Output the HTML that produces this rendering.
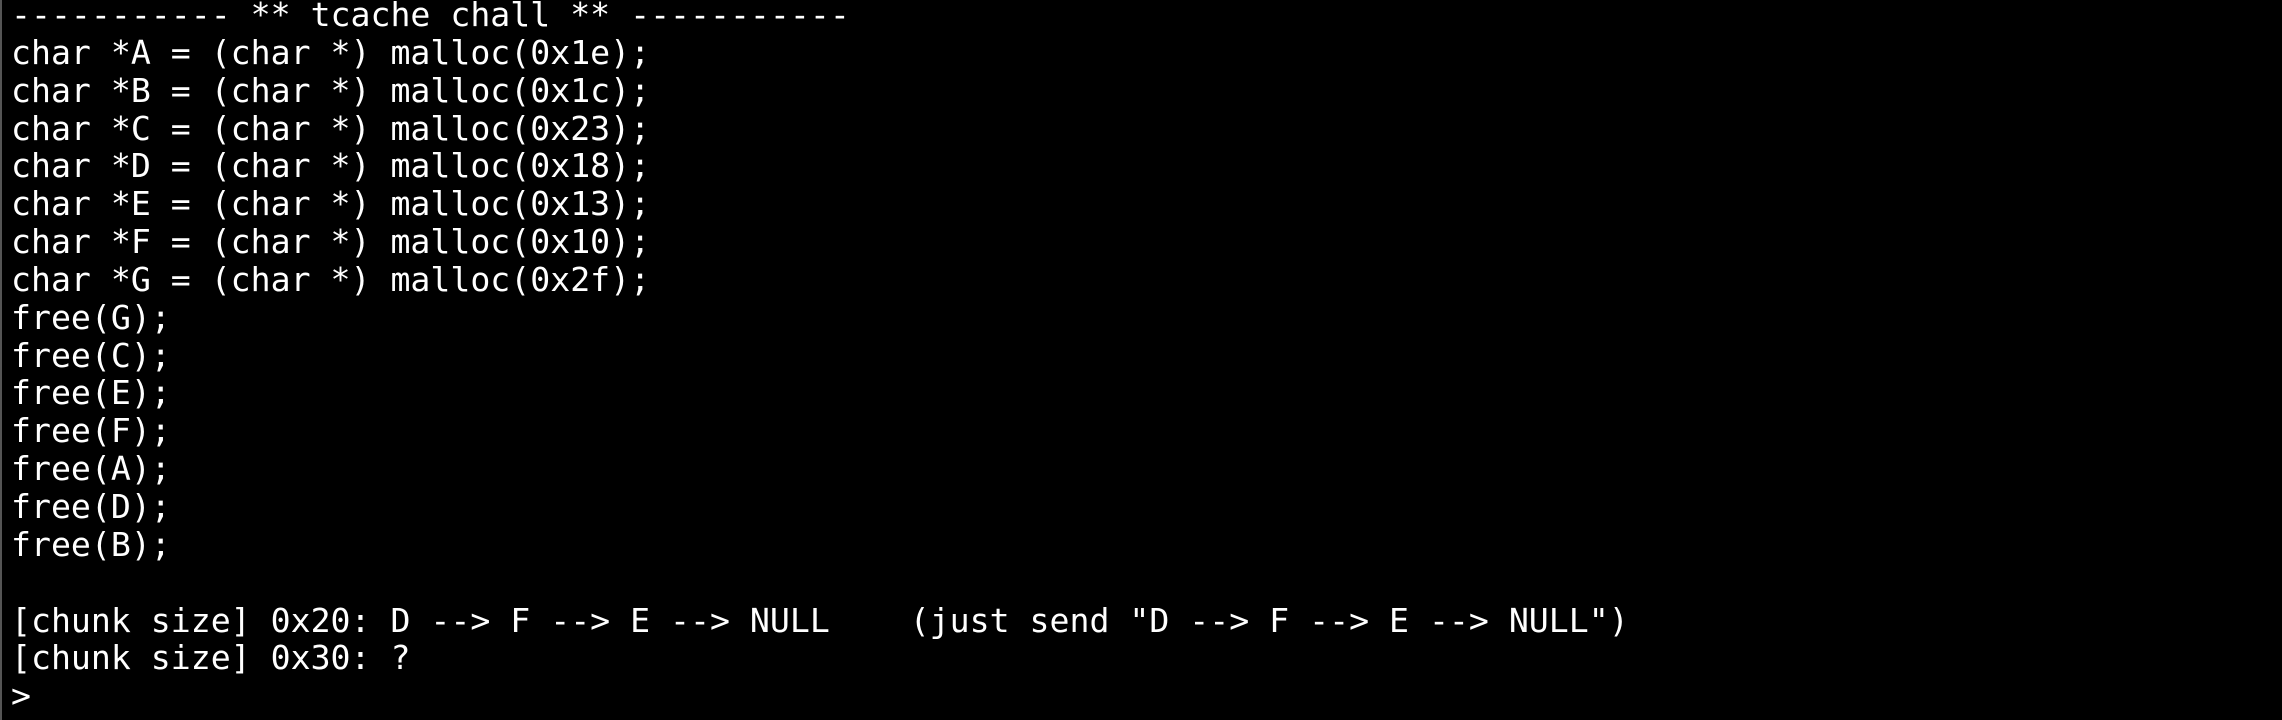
<!DOCTYPE html>
<html><head><style>
html,body{margin:0;padding:0;background:#000;width:2282px;height:720px;overflow:hidden}
pre{margin:0;position:absolute;left:11px;top:-4px;color:#fff;font-family:"DejaVu Sans Mono","Liberation Mono",monospace;font-size:33.18px;line-height:37.85px;}
.b{position:absolute;left:0;top:0;width:2px;height:720px;background:#555}
</style></head><body><div class="b"></div><pre>----------- ** tcache chall ** -----------
char *A = (char *) malloc(0x1e);
char *B = (char *) malloc(0x1c);
char *C = (char *) malloc(0x23);
char *D = (char *) malloc(0x18);
char *E = (char *) malloc(0x13);
char *F = (char *) malloc(0x10);
char *G = (char *) malloc(0x2f);
free(G);
free(C);
free(E);
free(F);
free(A);
free(D);
free(B);

[chunk size] 0x20: D --> F --> E --> NULL    (just send "D --> F --> E --> NULL")
[chunk size] 0x30: ?
&gt;</pre></body></html>
